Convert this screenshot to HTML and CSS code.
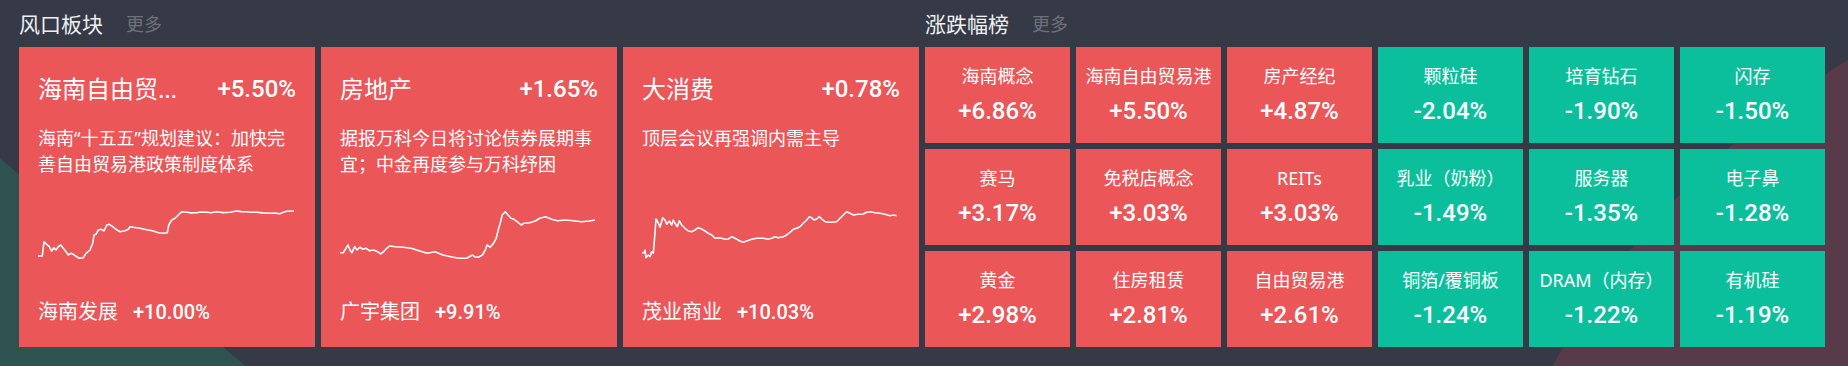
FILE: index.html
```html
<!DOCTYPE html>
<html lang="zh-CN">
<head>
<meta charset="utf-8">
<title>板块</title>
<link rel="stylesheet" href="styles.css">
</head>
<body>
<div class="board">
  <section class="section">
    <div class="head"><span class="head-title">风口板块</span><span class="head-more">更多</span></div>
    <div class="cards">
      <div class="card">
        <div class="card-top"><span class="card-name">海南自由贸易港</span><span class="card-pct">+5.50%</span></div>
        <div class="card-desc">海南“十五五”规划建议：加快完善自由贸易港政策制度体系</div>
        <svg class="card-chart" viewBox="0 0 258 70" width="258" height="70"><polyline points="0,59 4.3,59 6,44.7 8.7,47.3 11.3,49.7 13.7,54 16,50.7 18,53 20.3,49.7 22.7,48 25.3,51.3 28,54.7 30.3,58 32.7,56.3 35.3,57.3 38.7,59.7 41.3,61.3 45.3,60.7 48,56.3 52,53 54.7,46.3 56,38 58,37.3 60.3,33 63.7,32.3 66,34 68.7,28 71.3,27.3 74.7,29.7 78,32.3 82,34.7 87,33.7 90.3,32.3 92,29.7 95.3,30.3 102,31.3 108.7,32.7 115.3,34 120.3,35.7 125.3,36.3 129.3,35.7 130.7,28 133.7,23 137,21.3 140.3,18 143.7,14.7 148.7,15.3 153,15.9 158.7,15.7 163,15 168.7,15.3 173,15.8 178.7,14.7 185,15.6 192,15.3 198.7,14 203,14.6 208.7,14.7 213,15.2 218.7,15.3 225,15.9 232,16.3 237,16.1 242,16.7 245.3,15.3 248.7,14.3 256,14"/></svg>
        <div class="card-bottom"><span class="stock-name">海南发展</span><span class="stock-pct">+10.00%</span></div>
      </div>
      <div class="card">
        <div class="card-top"><span class="card-name">房地产</span><span class="card-pct">+1.65%</span></div>
        <div class="card-desc">据报万科今日将讨论债券展期事宜；中金再度参与万科纾困</div>
        <svg class="card-chart" viewBox="0 0 258 70" width="258" height="70"><polyline points="0,55.7 3.2,55.7 6,51.3 8,48 10,53 11.9,55.7 14.7,49.7 17.1,53 19.8,50.3 23,52.3 25.8,51.3 29.7,53.7 33.7,53 37.6,54.7 40.4,57 43.6,54.7 46.7,51.3 49.5,49 55.4,49.7 63.3,50.3 71.2,51.3 79.1,53.7 87,56.3 95,54.7 102.9,58 110.8,59.7 118.7,61.3 126.6,61.3 132.5,58 134.5,59.7 138.5,60.3 142.4,58 145.6,52.3 147.1,48 150.3,50.3 153.5,46.3 156.2,41.3 158.2,33 160.2,26.3 162.2,18 165.3,14.7 168.1,18 170.9,21.3 174,22.3 177.2,24.7 181.2,28 183.9,26.3 189.9,25.7 195.8,23.7 199.7,21.3 205.7,19.7 211.6,22.3 217.5,23.7 225.4,23 233.3,23.7 241.3,24.7 249.2,24 255.1,23"/></svg>
        <div class="card-bottom"><span class="stock-name">广宇集团</span><span class="stock-pct">+9.91%</span></div>
      </div>
      <div class="card">
        <div class="card-top"><span class="card-name">大消费</span><span class="card-pct">+0.78%</span></div>
        <div class="card-desc">顶层会议再强调内需主导</div>
        <svg class="card-chart" viewBox="0 0 258 70" width="258" height="70"><polyline points="0,55.7 2,55.7 3,53 4,60.7 6.3,58 8,59.7 9.7,54.7 11.3,56.3 12.3,44.7 14,22 15.7,24.7 18,30.3 20.7,20.7 23,23 24.7,27.3 27.3,24 29.7,28 31.3,23 33,26.3 35.3,29.7 37.3,23.7 39.7,28 43,31.3 46.3,34 49.7,34.7 53,33 56.3,30.7 59.7,32 63,34 66.3,36.3 69.7,38 73,41.3 76.3,40.7 79.7,41.3 83,42.3 86.3,42 89.7,39.7 93,41.3 98,44 101.3,45.3 104.7,44 109.7,42.3 114.7,41.3 121.3,41.3 126.3,42.3 129.7,41.3 133,39.7 136.3,40.7 141.3,39.7 144.7,38 148,35.3 151.3,32.3 154.7,31.3 158,29.7 161.3,26.3 164.7,23 167.3,19.7 169.7,20.7 172,23 174.7,22 177.3,19.7 179.7,22 183,24.7 188,25.3 194.7,24.7 198,21.3 201.3,18 204.7,14.7 208,16.3 211.3,18 216.3,17.3 221.3,17 224.7,15.3 228,14.7 233,15.7 238,16.3 243,17.3 248,18.7 251.3,18 254.7,18.7"/></svg>
        <div class="card-bottom"><span class="stock-name">茂业商业</span><span class="stock-pct">+10.03%</span></div>
      </div>
    </div>
  </section>
  <section class="section">
    <div class="head"><span class="head-title">涨跌幅榜</span><span class="head-more">更多</span></div>
    <div class="tiles">
      <div class="tile up"><span class="tile-name">海南概念</span><span class="tile-pct">+6.86%</span></div>
      <div class="tile up"><span class="tile-name">海南自由贸易港</span><span class="tile-pct">+5.50%</span></div>
      <div class="tile up"><span class="tile-name">房产经纪</span><span class="tile-pct">+4.87%</span></div>
      <div class="tile down"><span class="tile-name">颗粒硅</span><span class="tile-pct">-2.04%</span></div>
      <div class="tile down"><span class="tile-name">培育钻石</span><span class="tile-pct">-1.90%</span></div>
      <div class="tile down"><span class="tile-name">闪存</span><span class="tile-pct">-1.50%</span></div>
      <div class="tile up"><span class="tile-name">赛马</span><span class="tile-pct">+3.17%</span></div>
      <div class="tile up"><span class="tile-name">免税店概念</span><span class="tile-pct">+3.03%</span></div>
      <div class="tile up"><span class="tile-name">REITs</span><span class="tile-pct">+3.03%</span></div>
      <div class="tile down"><span class="tile-name">乳业（奶粉）</span><span class="tile-pct">-1.49%</span></div>
      <div class="tile down"><span class="tile-name">服务器</span><span class="tile-pct">-1.35%</span></div>
      <div class="tile down"><span class="tile-name">电子鼻</span><span class="tile-pct">-1.28%</span></div>
      <div class="tile up"><span class="tile-name">黄金</span><span class="tile-pct">+2.98%</span></div>
      <div class="tile up"><span class="tile-name">住房租赁</span><span class="tile-pct">+2.81%</span></div>
      <div class="tile up"><span class="tile-name">自由贸易港</span><span class="tile-pct">+2.61%</span></div>
      <div class="tile down"><span class="tile-name">铜箔/覆铜板</span><span class="tile-pct">-1.24%</span></div>
      <div class="tile down"><span class="tile-name">DRAM（内存）</span><span class="tile-pct">-1.22%</span></div>
      <div class="tile down"><span class="tile-name">有机硅</span><span class="tile-pct">-1.19%</span></div>
    </div>
  </section>
</div>
</body>
</html>
```
FILE: styles.css
```css
html, body {
  margin: 0;
  padding: 0;
}
body {
  width: 1848px;
  height: 366px;
  overflow: hidden;
  color: #fff;
  font-family: "Noto Sans", "Noto Sans CJK SC", sans-serif;
  background-color: #353a46;
  background-image:
    linear-gradient(40.25deg, #2f5351 158px, rgba(47, 83, 81, 0) 159px),
    radial-gradient(circle 841px at 2285px 778px, #583b4a 840px, rgba(88, 59, 74, 0) 841px);
}
.board {
  display: grid;
  grid-template-columns: 900px 900px;
  column-gap: 6px;
  padding-left: 19px;
}
.head {
  height: 47px;
  display: flex;
  align-items: center;
  gap: 23px;
}
.head-title {
  font-size: 21px;
  line-height: 28px;
  color: #eef0f3;
}
.head-more {
  font-size: 18px;
  line-height: 28px;
  color: #6d717b;
}
.cards {
  display: grid;
  grid-template-columns: repeat(3, 296px);
  column-gap: 6px;
  height: 300px;
}
.card {
  background: #eb5658;
  display: flex;
  flex-direction: column;
  box-sizing: border-box;
  height: 300px;
  padding: 26px 19px 21px;
}
.card-top {
  display: flex;
  align-items: center;
  gap: 30px;
  height: 32px;
}
.card-name {
  flex: 1;
  min-width: 0;
  font-size: 24px;
  line-height: 32px;
  white-space: nowrap;
  overflow: hidden;
  text-overflow: ellipsis;
}
.card-pct {
  font-family: Roboto, sans-serif;
  font-weight: 500;
  font-size: 24px;
  line-height: 32px;
}
.card-desc {
  margin-top: 20px;
  height: 52px;
  font-size: 18px;
  line-height: 26px;
  overflow: hidden;
}
.card-chart {
  display: block;
  margin-top: 20px;
  width: 258px;
  height: 70px;
  overflow: visible;
}
.card-chart polyline {
  fill: none;
  stroke: #fff;
  stroke-width: 1.6;
  stroke-linejoin: round;
}
.card-bottom {
  margin-top: auto;
  display: flex;
  align-items: center;
  gap: 15px;
  height: 28px;
}
.stock-name {
  font-size: 20px;
  line-height: 28px;
}
.stock-pct {
  font-family: Roboto, sans-serif;
  font-weight: 500;
  font-size: 20px;
  line-height: 28px;
}
.tiles {
  display: grid;
  grid-template-columns: repeat(6, 145px);
  grid-template-rows: repeat(3, 96px);
  gap: 6px;
}
.tile {
  display: flex;
  flex-direction: column;
  align-items: center;
  justify-content: center;
  gap: 8px;
}
.tile.up {
  background: #eb5658;
}
.tile.down {
  background: #0bbf9c;
}
.tile-name {
  font-size: 18px;
  line-height: 24px;
  white-space: nowrap;
}
.tile-pct {
  font-family: Roboto, sans-serif;
  font-weight: 500;
  font-size: 24px;
  line-height: 30px;
}
```
